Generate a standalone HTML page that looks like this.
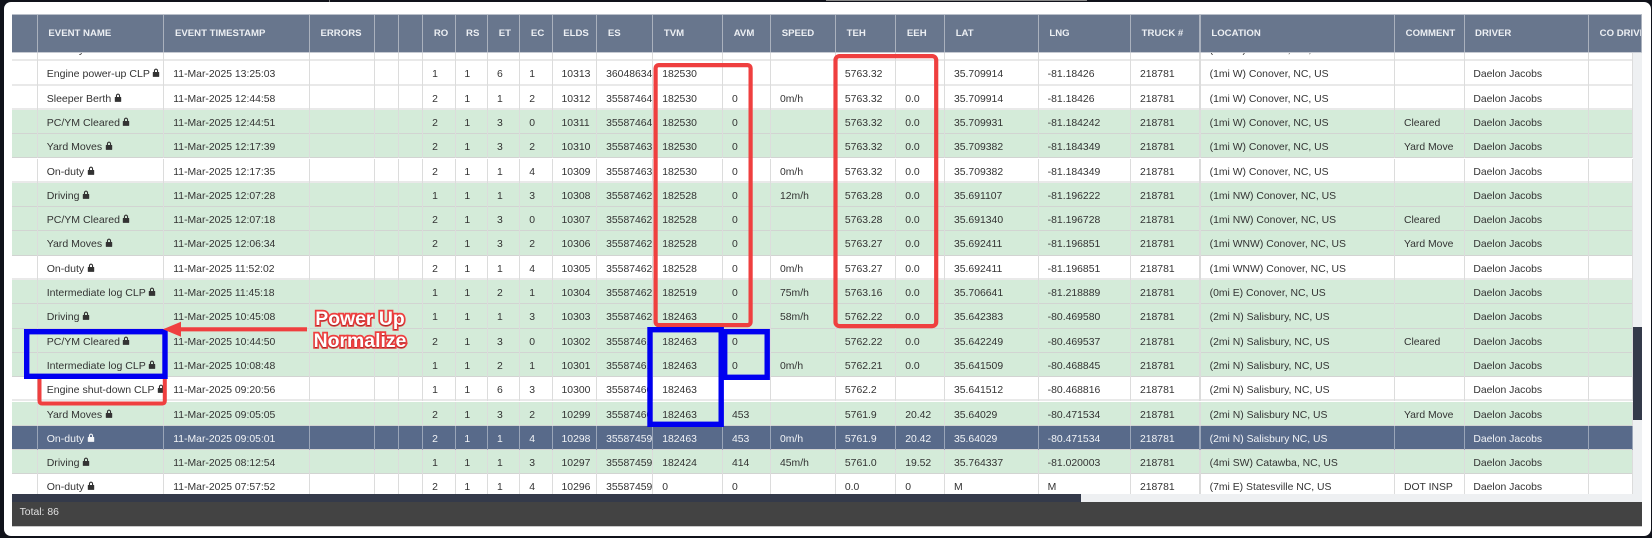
<!DOCTYPE html>
<html lang="en"><head><meta charset="utf-8"><title>Events</title>
<style>
html,body{margin:0;padding:0;width:1652px;height:538px;overflow:hidden;background:#10121a;font-family:"Liberation Sans",Arial,sans-serif}
#card{position:absolute;left:3.5px;top:2px;width:1647.5px;height:534px;background:#fff;border-radius:7px}
#strip1{position:absolute;left:329px;top:0;width:1px;height:2px;background:#777}
#strip2{position:absolute;left:826px;top:0;width:261px;height:1px;background:#888}
#wrap{position:absolute;left:0;top:0;width:1652px;height:538px;filter:blur(.35px)}
.g0{display:grid;grid-template-columns:26.3px 126.6px 145.5px 64.6px 24.4px 24.4px 32.2px 32.7px 32.2px 32.3px 44.6px 56.1px 69.8px 48px 64.9px 60.3px 48.8px 93.7px 92.3px 69.7px 194.3px 69.4px 124.6px 43.7px}
#head{position:absolute;left:11.6px;top:14px;width:1630.4px;height:39px;background:#68768d;box-sizing:border-box;border-top:1px solid #b9bfc9;border-bottom:1px solid #c6cad2;overflow:hidden;grid-template-columns:26.3px 126.6px 145.5px 64.6px 24.4px 24.4px 32.2px 32.7px 32.2px 32.3px 44.6px 56.1px 69.8px 48px 64.9px 60.3px 48.8px 93.7px 92.3px 69.7px 194.3px 69.4px 124.6px 52.7px}
#head span{box-sizing:border-box;border-right:1px solid #aab1bd;color:#eceff3;font-size:9.6px;font-weight:bold;line-height:38px;padding-left:10.5px;white-space:nowrap;overflow:hidden}
#head span:nth-child(20){border-right-width:2px}
#body{position:absolute;left:11.6px;top:53px;width:1621.4px;height:441px;overflow:hidden;background:#fff}
.r{position:absolute;left:0;width:1621.4px;height:24.3px;box-sizing:border-box;background:#fff;border-bottom:2px solid #e9e9e9}
.g{background:#d4ebd9;border-bottom:1px solid #d2d4d2}
.s{background:#586a8a;border-bottom:1px solid #d2d4d2}
.r span{box-sizing:border-box;height:24.3px;border-right:1px solid #dcdcdc;color:#333;font-size:10.4px;line-height:27px;padding-left:8.8px;white-space:nowrap;overflow:hidden}
.r span:nth-child(2){font-size:10.55px;padding-left:8.8px}
.r span:nth-child(20){border-right:2px solid #dcdcdc}
.s span,.s span:nth-child(20){color:#f2f4f7;border-right-color:#9aa5b8}
.k{width:8px;height:9px;margin-left:2.5px;vertical-align:0;fill:currentColor}
#hbar{position:absolute;left:11.6px;top:494px;width:1621.4px;height:8px;background:#eef0f2}
#hthumb{position:absolute;left:11.6px;top:494px;width:1069px;height:8px;background:#343a4a}
#vbar{position:absolute;left:1633px;top:53px;width:9px;height:449px;background:#eef0f2}
#vthumb{position:absolute;left:1633px;top:327px;width:9px;height:93px;background:#343a4a}
#foot{position:absolute;left:11.6px;top:502px;width:1630.4px;height:24px;background:#434343;border-bottom:1px solid #c8c8c8;color:#e2e2e2;font-size:10.4px;line-height:22px;text-indent:8px}
#ann{position:absolute;left:0;top:0}
.pw{position:absolute;left:280px;width:160px;text-align:center;font-size:19.4px;font-weight:bold;color:#fff;-webkit-text-stroke:3.4px #ef3f3f;paint-order:stroke fill;line-height:22px;text-shadow:0 1px 1px rgba(60,0,0,.45)}
</style></head>
<body>
<div id="strip1"></div><div id="strip2"></div>
<div id="card"></div>
<div id="wrap">
<div id="head" class="g0" style="display:grid"><span></span><span>EVENT NAME</span><span>EVENT TIMESTAMP</span><span>ERRORS</span><span></span><span></span><span>RO</span><span>RS</span><span>ET</span><span>EC</span><span>ELDS</span><span>ES</span><span>TVM</span><span>AVM</span><span>SPEED</span><span>TEH</span><span>EEH</span><span>LAT</span><span>LNG</span><span>TRUCK #</span><span>LOCATION</span><span>COMMENT</span><span>DRIVER</span><span>CO DRIVER</span></div>
<div id="body">
<div class="r g0" style="display:grid;top:-16px"><span></span><span>On-duty</span><span>11-Mar-2025 13:25:10</span><span></span><span></span><span></span><span>2</span><span>1</span><span>1</span><span>4</span><span>10314</span><span>36048635</span><span>182530</span><span>0</span><span>0m/h</span><span>5763.32</span><span>0.0</span><span>35.709914</span><span>-81.18426</span><span>218781</span><span>(1mi W) Conover, NC, US</span><span></span><span>Daelon Jacobs</span><span></span></div>
<div class="r g0" style="display:grid;top:8.3px"><span></span><span>Engine power-up CLP<svg class="k" viewBox="0 0 8 9"><path fill-rule="evenodd" d="M1.9 4V2.7a2.1 2.1 0 0 1 4.2 0V4h.6c.3 0 .5.2.5.5v3.9c0 .3-.2.5-.5.5H1.3c-.3 0-.5-.2-.5-.5V4.5c0-.3.2-.5.5-.5zM3 4h2V2.7a1 1 0 0 0-2 0z"/></svg></span><span>11-Mar-2025 13:25:03</span><span></span><span></span><span></span><span>1</span><span>1</span><span>6</span><span>1</span><span>10313</span><span>36048634</span><span>182530</span><span></span><span></span><span>5763.32</span><span></span><span>35.709914</span><span>-81.18426</span><span>218781</span><span>(1mi W) Conover, NC, US</span><span></span><span>Daelon Jacobs</span><span></span></div>
<div class="r g0" style="display:grid;top:32.6px"><span></span><span>Sleeper Berth<svg class="k" viewBox="0 0 8 9"><path fill-rule="evenodd" d="M1.9 4V2.7a2.1 2.1 0 0 1 4.2 0V4h.6c.3 0 .5.2.5.5v3.9c0 .3-.2.5-.5.5H1.3c-.3 0-.5-.2-.5-.5V4.5c0-.3.2-.5.5-.5zM3 4h2V2.7a1 1 0 0 0-2 0z"/></svg></span><span>11-Mar-2025 12:44:58</span><span></span><span></span><span></span><span>2</span><span>1</span><span>1</span><span>2</span><span>10312</span><span>35587464</span><span>182530</span><span>0</span><span>0m/h</span><span>5763.32</span><span>0.0</span><span>35.709914</span><span>-81.18426</span><span>218781</span><span>(1mi W) Conover, NC, US</span><span></span><span>Daelon Jacobs</span><span></span></div>
<div class="r g g0" style="display:grid;top:56.9px"><span></span><span>PC/YM Cleared<svg class="k" viewBox="0 0 8 9"><path fill-rule="evenodd" d="M1.9 4V2.7a2.1 2.1 0 0 1 4.2 0V4h.6c.3 0 .5.2.5.5v3.9c0 .3-.2.5-.5.5H1.3c-.3 0-.5-.2-.5-.5V4.5c0-.3.2-.5.5-.5zM3 4h2V2.7a1 1 0 0 0-2 0z"/></svg></span><span>11-Mar-2025 12:44:51</span><span></span><span></span><span></span><span>2</span><span>1</span><span>3</span><span>0</span><span>10311</span><span>35587464</span><span>182530</span><span>0</span><span></span><span>5763.32</span><span>0.0</span><span>35.709931</span><span>-81.184242</span><span>218781</span><span>(1mi W) Conover, NC, US</span><span>Cleared</span><span>Daelon Jacobs</span><span></span></div>
<div class="r g g0" style="display:grid;top:81.2px"><span></span><span>Yard Moves<svg class="k" viewBox="0 0 8 9"><path fill-rule="evenodd" d="M1.9 4V2.7a2.1 2.1 0 0 1 4.2 0V4h.6c.3 0 .5.2.5.5v3.9c0 .3-.2.5-.5.5H1.3c-.3 0-.5-.2-.5-.5V4.5c0-.3.2-.5.5-.5zM3 4h2V2.7a1 1 0 0 0-2 0z"/></svg></span><span>11-Mar-2025 12:17:39</span><span></span><span></span><span></span><span>2</span><span>1</span><span>3</span><span>2</span><span>10310</span><span>35587463</span><span>182530</span><span>0</span><span></span><span>5763.32</span><span>0.0</span><span>35.709382</span><span>-81.184349</span><span>218781</span><span>(1mi W) Conover, NC, US</span><span>Yard Move</span><span>Daelon Jacobs</span><span></span></div>
<div class="r g0" style="display:grid;top:105.5px"><span></span><span>On-duty<svg class="k" viewBox="0 0 8 9"><path fill-rule="evenodd" d="M1.9 4V2.7a2.1 2.1 0 0 1 4.2 0V4h.6c.3 0 .5.2.5.5v3.9c0 .3-.2.5-.5.5H1.3c-.3 0-.5-.2-.5-.5V4.5c0-.3.2-.5.5-.5zM3 4h2V2.7a1 1 0 0 0-2 0z"/></svg></span><span>11-Mar-2025 12:17:35</span><span></span><span></span><span></span><span>2</span><span>1</span><span>1</span><span>4</span><span>10309</span><span>35587463</span><span>182530</span><span>0</span><span>0m/h</span><span>5763.32</span><span>0.0</span><span>35.709382</span><span>-81.184349</span><span>218781</span><span>(1mi W) Conover, NC, US</span><span></span><span>Daelon Jacobs</span><span></span></div>
<div class="r g g0" style="display:grid;top:129.8px"><span></span><span>Driving<svg class="k" viewBox="0 0 8 9"><path fill-rule="evenodd" d="M1.9 4V2.7a2.1 2.1 0 0 1 4.2 0V4h.6c.3 0 .5.2.5.5v3.9c0 .3-.2.5-.5.5H1.3c-.3 0-.5-.2-.5-.5V4.5c0-.3.2-.5.5-.5zM3 4h2V2.7a1 1 0 0 0-2 0z"/></svg></span><span>11-Mar-2025 12:07:28</span><span></span><span></span><span></span><span>1</span><span>1</span><span>1</span><span>3</span><span>10308</span><span>35587462</span><span>182528</span><span>0</span><span>12m/h</span><span>5763.28</span><span>0.0</span><span>35.691107</span><span>-81.196222</span><span>218781</span><span>(1mi NW) Conover, NC, US</span><span></span><span>Daelon Jacobs</span><span></span></div>
<div class="r g g0" style="display:grid;top:154.1px"><span></span><span>PC/YM Cleared<svg class="k" viewBox="0 0 8 9"><path fill-rule="evenodd" d="M1.9 4V2.7a2.1 2.1 0 0 1 4.2 0V4h.6c.3 0 .5.2.5.5v3.9c0 .3-.2.5-.5.5H1.3c-.3 0-.5-.2-.5-.5V4.5c0-.3.2-.5.5-.5zM3 4h2V2.7a1 1 0 0 0-2 0z"/></svg></span><span>11-Mar-2025 12:07:18</span><span></span><span></span><span></span><span>2</span><span>1</span><span>3</span><span>0</span><span>10307</span><span>35587462</span><span>182528</span><span>0</span><span></span><span>5763.28</span><span>0.0</span><span>35.691340</span><span>-81.196728</span><span>218781</span><span>(1mi NW) Conover, NC, US</span><span>Cleared</span><span>Daelon Jacobs</span><span></span></div>
<div class="r g g0" style="display:grid;top:178.4px"><span></span><span>Yard Moves<svg class="k" viewBox="0 0 8 9"><path fill-rule="evenodd" d="M1.9 4V2.7a2.1 2.1 0 0 1 4.2 0V4h.6c.3 0 .5.2.5.5v3.9c0 .3-.2.5-.5.5H1.3c-.3 0-.5-.2-.5-.5V4.5c0-.3.2-.5.5-.5zM3 4h2V2.7a1 1 0 0 0-2 0z"/></svg></span><span>11-Mar-2025 12:06:34</span><span></span><span></span><span></span><span>2</span><span>1</span><span>3</span><span>2</span><span>10306</span><span>35587462</span><span>182528</span><span>0</span><span></span><span>5763.27</span><span>0.0</span><span>35.692411</span><span>-81.196851</span><span>218781</span><span>(1mi WNW) Conover, NC, US</span><span>Yard Move</span><span>Daelon Jacobs</span><span></span></div>
<div class="r g0" style="display:grid;top:202.7px"><span></span><span>On-duty<svg class="k" viewBox="0 0 8 9"><path fill-rule="evenodd" d="M1.9 4V2.7a2.1 2.1 0 0 1 4.2 0V4h.6c.3 0 .5.2.5.5v3.9c0 .3-.2.5-.5.5H1.3c-.3 0-.5-.2-.5-.5V4.5c0-.3.2-.5.5-.5zM3 4h2V2.7a1 1 0 0 0-2 0z"/></svg></span><span>11-Mar-2025 11:52:02</span><span></span><span></span><span></span><span>2</span><span>1</span><span>1</span><span>4</span><span>10305</span><span>35587462</span><span>182528</span><span>0</span><span>0m/h</span><span>5763.27</span><span>0.0</span><span>35.692411</span><span>-81.196851</span><span>218781</span><span>(1mi WNW) Conover, NC, US</span><span></span><span>Daelon Jacobs</span><span></span></div>
<div class="r g g0" style="display:grid;top:227px"><span></span><span>Intermediate log CLP<svg class="k" viewBox="0 0 8 9"><path fill-rule="evenodd" d="M1.9 4V2.7a2.1 2.1 0 0 1 4.2 0V4h.6c.3 0 .5.2.5.5v3.9c0 .3-.2.5-.5.5H1.3c-.3 0-.5-.2-.5-.5V4.5c0-.3.2-.5.5-.5zM3 4h2V2.7a1 1 0 0 0-2 0z"/></svg></span><span>11-Mar-2025 11:45:18</span><span></span><span></span><span></span><span>1</span><span>1</span><span>2</span><span>1</span><span>10304</span><span>35587462</span><span>182519</span><span>0</span><span>75m/h</span><span>5763.16</span><span>0.0</span><span>35.706641</span><span>-81.218889</span><span>218781</span><span>(0mi E) Conover, NC, US</span><span></span><span>Daelon Jacobs</span><span></span></div>
<div class="r g g0" style="display:grid;top:251.3px"><span></span><span>Driving<svg class="k" viewBox="0 0 8 9"><path fill-rule="evenodd" d="M1.9 4V2.7a2.1 2.1 0 0 1 4.2 0V4h.6c.3 0 .5.2.5.5v3.9c0 .3-.2.5-.5.5H1.3c-.3 0-.5-.2-.5-.5V4.5c0-.3.2-.5.5-.5zM3 4h2V2.7a1 1 0 0 0-2 0z"/></svg></span><span>11-Mar-2025 10:45:08</span><span></span><span></span><span></span><span>1</span><span>1</span><span>1</span><span>3</span><span>10303</span><span>35587462</span><span>182463</span><span>0</span><span>58m/h</span><span>5762.22</span><span>0.0</span><span>35.642383</span><span>-80.469580</span><span>218781</span><span>(2mi N) Salisbury, NC, US</span><span></span><span>Daelon Jacobs</span><span></span></div>
<div class="r g g0" style="display:grid;top:275.6px"><span></span><span>PC/YM Cleared<svg class="k" viewBox="0 0 8 9"><path fill-rule="evenodd" d="M1.9 4V2.7a2.1 2.1 0 0 1 4.2 0V4h.6c.3 0 .5.2.5.5v3.9c0 .3-.2.5-.5.5H1.3c-.3 0-.5-.2-.5-.5V4.5c0-.3.2-.5.5-.5zM3 4h2V2.7a1 1 0 0 0-2 0z"/></svg></span><span>11-Mar-2025 10:44:50</span><span></span><span></span><span></span><span>2</span><span>1</span><span>3</span><span>0</span><span>10302</span><span>35587461</span><span>182463</span><span>0</span><span></span><span>5762.22</span><span>0.0</span><span>35.642249</span><span>-80.469537</span><span>218781</span><span>(2mi N) Salisbury, NC, US</span><span>Cleared</span><span>Daelon Jacobs</span><span></span></div>
<div class="r g g0" style="display:grid;top:299.9px"><span></span><span>Intermediate log CLP<svg class="k" viewBox="0 0 8 9"><path fill-rule="evenodd" d="M1.9 4V2.7a2.1 2.1 0 0 1 4.2 0V4h.6c.3 0 .5.2.5.5v3.9c0 .3-.2.5-.5.5H1.3c-.3 0-.5-.2-.5-.5V4.5c0-.3.2-.5.5-.5zM3 4h2V2.7a1 1 0 0 0-2 0z"/></svg></span><span>11-Mar-2025 10:08:48</span><span></span><span></span><span></span><span>1</span><span>1</span><span>2</span><span>1</span><span>10301</span><span>35587461</span><span>182463</span><span>0</span><span>0m/h</span><span>5762.21</span><span>0.0</span><span>35.641509</span><span>-80.468845</span><span>218781</span><span>(2mi N) Salisbury, NC, US</span><span></span><span>Daelon Jacobs</span><span></span></div>
<div class="r g0" style="display:grid;top:324.2px"><span></span><span>Engine shut-down CLP<svg class="k" viewBox="0 0 8 9"><path fill-rule="evenodd" d="M1.9 4V2.7a2.1 2.1 0 0 1 4.2 0V4h.6c.3 0 .5.2.5.5v3.9c0 .3-.2.5-.5.5H1.3c-.3 0-.5-.2-.5-.5V4.5c0-.3.2-.5.5-.5zM3 4h2V2.7a1 1 0 0 0-2 0z"/></svg></span><span>11-Mar-2025 09:20:56</span><span></span><span></span><span></span><span>1</span><span>1</span><span>6</span><span>3</span><span>10300</span><span>35587460</span><span>182463</span><span></span><span></span><span>5762.2</span><span></span><span>35.641512</span><span>-80.468816</span><span>218781</span><span>(2mi N) Salisbury, NC, US</span><span></span><span>Daelon Jacobs</span><span></span></div>
<div class="r g g0" style="display:grid;top:348.5px"><span></span><span>Yard Moves<svg class="k" viewBox="0 0 8 9"><path fill-rule="evenodd" d="M1.9 4V2.7a2.1 2.1 0 0 1 4.2 0V4h.6c.3 0 .5.2.5.5v3.9c0 .3-.2.5-.5.5H1.3c-.3 0-.5-.2-.5-.5V4.5c0-.3.2-.5.5-.5zM3 4h2V2.7a1 1 0 0 0-2 0z"/></svg></span><span>11-Mar-2025 09:05:05</span><span></span><span></span><span></span><span>2</span><span>1</span><span>3</span><span>2</span><span>10299</span><span>35587460</span><span>182463</span><span>453</span><span></span><span>5761.9</span><span>20.42</span><span>35.64029</span><span>-80.471534</span><span>218781</span><span>(2mi N) Salisbury NC, US</span><span>Yard Move</span><span>Daelon Jacobs</span><span></span></div>
<div class="r s g0" style="display:grid;top:372.8px"><span></span><span>On-duty<svg class="k" viewBox="0 0 8 9"><path fill-rule="evenodd" d="M1.9 4V2.7a2.1 2.1 0 0 1 4.2 0V4h.6c.3 0 .5.2.5.5v3.9c0 .3-.2.5-.5.5H1.3c-.3 0-.5-.2-.5-.5V4.5c0-.3.2-.5.5-.5zM3 4h2V2.7a1 1 0 0 0-2 0z"/></svg></span><span>11-Mar-2025 09:05:01</span><span></span><span></span><span></span><span>2</span><span>1</span><span>1</span><span>4</span><span>10298</span><span>35587459</span><span>182463</span><span>453</span><span>0m/h</span><span>5761.9</span><span>20.42</span><span>35.64029</span><span>-80.471534</span><span>218781</span><span>(2mi N) Salisbury NC, US</span><span></span><span>Daelon Jacobs</span><span></span></div>
<div class="r g g0" style="display:grid;top:397.1px"><span></span><span>Driving<svg class="k" viewBox="0 0 8 9"><path fill-rule="evenodd" d="M1.9 4V2.7a2.1 2.1 0 0 1 4.2 0V4h.6c.3 0 .5.2.5.5v3.9c0 .3-.2.5-.5.5H1.3c-.3 0-.5-.2-.5-.5V4.5c0-.3.2-.5.5-.5zM3 4h2V2.7a1 1 0 0 0-2 0z"/></svg></span><span>11-Mar-2025 08:12:54</span><span></span><span></span><span></span><span>1</span><span>1</span><span>1</span><span>3</span><span>10297</span><span>35587459</span><span>182424</span><span>414</span><span>45m/h</span><span>5761.0</span><span>19.52</span><span>35.764337</span><span>-81.020003</span><span>218781</span><span>(4mi SW) Catawba, NC, US</span><span></span><span>Daelon Jacobs</span><span></span></div>
<div class="r g0" style="display:grid;top:421.4px"><span></span><span>On-duty<svg class="k" viewBox="0 0 8 9"><path fill-rule="evenodd" d="M1.9 4V2.7a2.1 2.1 0 0 1 4.2 0V4h.6c.3 0 .5.2.5.5v3.9c0 .3-.2.5-.5.5H1.3c-.3 0-.5-.2-.5-.5V4.5c0-.3.2-.5.5-.5zM3 4h2V2.7a1 1 0 0 0-2 0z"/></svg></span><span>11-Mar-2025 07:57:52</span><span></span><span></span><span></span><span>2</span><span>1</span><span>1</span><span>4</span><span>10296</span><span>35587459</span><span>0</span><span>0</span><span></span><span>0.0</span><span>0</span><span>M</span><span>M</span><span>218781</span><span>(7mi E) Statesville NC, US</span><span>DOT INSP</span><span>Daelon Jacobs</span><span></span></div>
</div>
<div id="hbar"></div><div id="hthumb"></div><div id="vbar"></div><div id="vthumb"></div>
<div id="foot">Total: 86</div>
<svg id="ann" width="1652" height="538" viewBox="0 0 1652 538" fill="none">
<rect x="655.6" y="65.1" width="95" height="260" rx="3" stroke="#ef3f3f" stroke-width="4.2"/>
<rect x="835.5" y="56.1" width="100.7" height="270" rx="4" stroke="#ef3f3f" stroke-width="4.2"/>
<path d="M39.5 379v22c0 1.5 1 2.5 2.5 2.5h120.500c1.500 0 2.300-1 2.300-2.500v-22" stroke="#ef3f3f" stroke-width="4"/>
<rect x="26.7" y="331.7" width="138.3" height="44.6" stroke="#0000f0" stroke-width="5.4"/>
<rect x="650" y="329.7" width="71.2" height="94.6" stroke="#0000f0" stroke-width="5.4"/>
<rect x="724.7" y="331.7" width="42.5" height="45.6" stroke="#0000f0" stroke-width="5.4"/>
<path d="M307 329.3H178" stroke="#ef3f3f" stroke-width="4.2"/>
<path d="M163 329.3l18-7.500v15z" fill="#ef3f3f"/>
</svg>
<div class="pw" style="top:308px">Power Up</div>
<div class="pw" style="top:330px">Normalize</div>
</div>
</body></html>
